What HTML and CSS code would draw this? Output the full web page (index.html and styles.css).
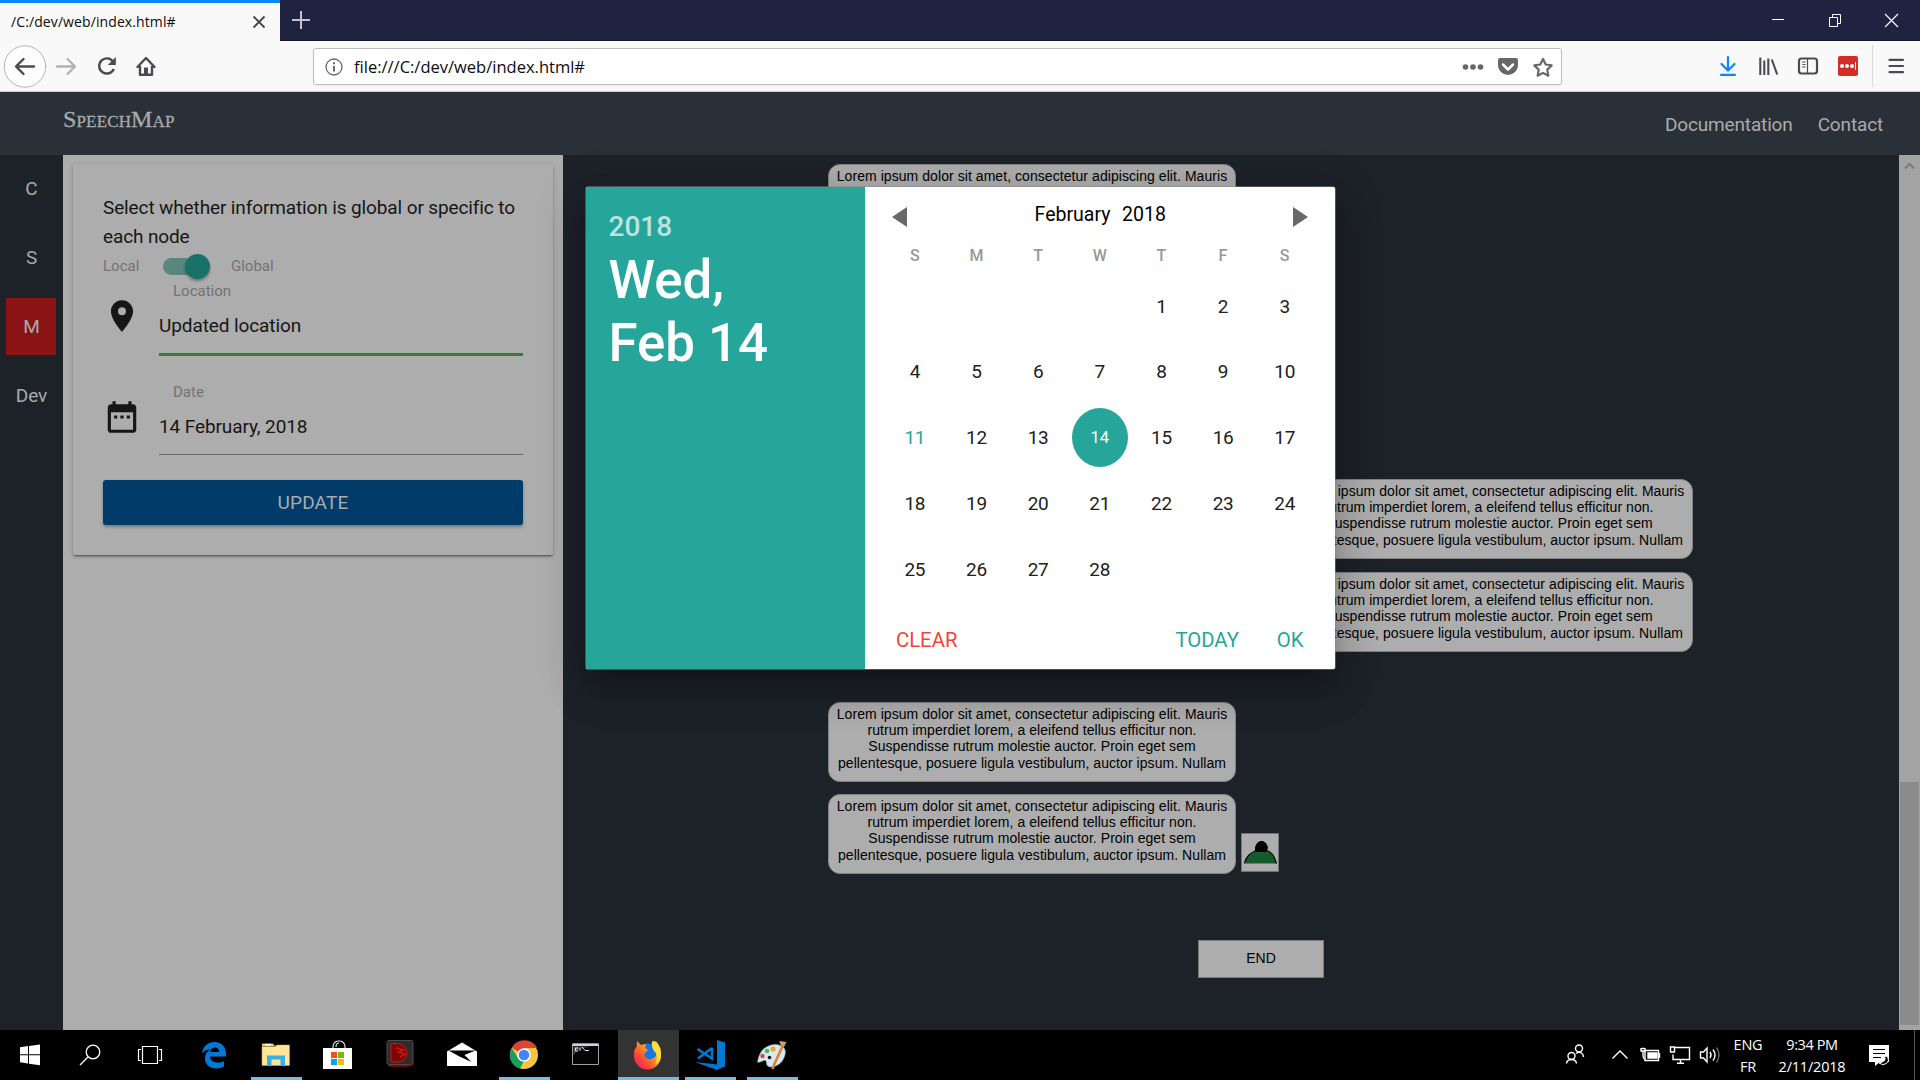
FILE: index.html
```html
<!DOCTYPE html>
<html lang="en">
<head>
<meta charset="utf-8">
<title>/C:/dev/web/index.html#</title>
<link rel="stylesheet" href="styles.css">
</head>
<body>
<div class="screen">
  <div class="tabstrip">
    <div class="tab"><span class="tab-title">/C:/dev/web/index.html#</span>
      <svg class="tab-close" viewBox="0 0 14 14"><path d="M1.5 1.5l11 11M12.500 1.500l-11 11" stroke="#444" stroke-width="1.800" fill="none"/></svg>
    </div>
    <svg class="tab-new" viewBox="0 0 18 18"><path d="M9 0v18M0 9h18" stroke="#c2c3cf" stroke-width="2"/></svg>
    <div class="window-buttons">
      <svg viewBox="1749 0 57 41"><path d="M1772 19.500h12" stroke="#fff"/></svg>
      <svg viewBox="1806 0 57 41"><path d="M1829.500 17.500h8v9h-8zM1832.500 17v-2.500h8v9h-2.500" stroke="#fff" fill="none"/></svg>
      <svg viewBox="1863 0 57 41"><path d="M1885 14l13 13M1898 14l-13 13" stroke="#fff" stroke-width="1.200"/></svg>
    </div>
  </div>

  <div class="toolbar">
    <svg class="nav-icons" viewBox="0 41 313 50" fill="none" stroke="#4a4a4f" stroke-width="2.400" stroke-linecap="round" stroke-linejoin="round">
      <circle cx="25" cy="66.500" r="20.700" fill="#fdfdfd" stroke="#b5b5b5" stroke-width="1"/>
      <path d="M34 66.500H16.500M23.500 59l-7.500 7.500 7.500 7.500"/>
      <path d="M57 66.500h17.500M67.500 59l7.500 7.500-7.500 7.500" stroke="#b4b4b4"/>
      <path d="M113 61.500A7.600 7.600 0 1 0 113.800 69" stroke-linecap="butt"/><path d="M115.800 57v8h-8z" fill="#4a4a4f" stroke="none"/>
      <path d="M137.500 67l8.500-9 8.500 9M140 66v8.800h12V66"/><path d="M144 74v-6.500h4V74z" fill="#4a4a4f" stroke="none"/>
    </svg>
    <div class="urlbar">
      <svg class="info" viewBox="0 0 18 18"><circle cx="9" cy="9" r="8" fill="none" stroke="#6a6a6a" stroke-width="1.300"/><path d="M9 8v5.500M9 4.300v2" stroke="#6a6a6a" stroke-width="2"/></svg>
      <span class="url">file:///C:/dev/web/index.html#</span>
      <svg class="url-actions" viewBox="1460 48 101 36">
        <g fill="#67676b"><circle cx="1465.500" cy="66" r="2.800"/><circle cx="1473" cy="66" r="2.800"/><circle cx="1480.500" cy="66" r="2.800"/>
        <path d="M1500 57h16q2 0 2 2v5a10 10 0 0 1-20 0v-5q0-2 2-2z"/></g>
        <path d="M1503 63.500l5 5 5-5" fill="none" stroke="#fff" stroke-width="2.500" stroke-linecap="round" stroke-linejoin="round"/>
        <path d="M1543 58l2.700 5.500 6 .9-4.400 4.200 1 6.100-5.300-2.800-5.300 2.800 1-6.100-4.400-4.200 6-.9z" fill="none" stroke="#67676b" stroke-width="2.200" stroke-linejoin="round"/>
      </svg>
    </div>
    <svg class="tool-icons" viewBox="1710 41 210 50" fill="none">
      <path d="M1728 57v12.500M1721.500 64l6.500 6.500 6.500-6.500M1721 74.800h14" stroke="#0a84ff" stroke-width="2.200" stroke-linecap="round" stroke-linejoin="round"/>
      <path d="M1760.300 57.500v17.500M1764.300 60.500v14.500M1768.300 58.500v16.500M1771.800 59.500l5.400 15" stroke="#4a4a4f" stroke-width="2.100"/>
      <rect x="1799" y="58.500" width="18" height="15" rx="2.500" stroke="#4a4a4f" stroke-width="2.200"/><path d="M1807.500 58v16M1802 62h3.500M1802.500 64.500h3M1802 67h3.500" stroke="#4a4a4f" stroke-width="1.200"/>
      <rect x="1838" y="56" width="20" height="20" rx="2" fill="#d32d27"/><g fill="#fff"><circle cx="1842" cy="66" r="2"/><circle cx="1847" cy="66" r="2"/><circle cx="1852" cy="66" r="2"/><path d="M1855 62h1v8h-1z"/></g>
      <path d="M1872.500 45v42" stroke="#dcdcdc"/>
      <path d="M1889.500 59.800h13.500M1889.500 66h13.500M1889.500 72.200h13.500" stroke="#4a4a4f" stroke-width="2.200" stroke-linecap="round"/>
    </svg>
  </div>

  <header class="app-header">
    <span class="brand">SpeechMap</span>
    <nav class="links"><span>Documentation</span><span>Contact</span></nav>
  </header>

  <main class="app">
    <aside class="rail">
      <div class="rail-item">C</div><div class="rail-item">S</div><div class="rail-item active">M</div><div class="rail-item">Dev</div>
    </aside>
    <section class="panel">
      <div class="card">
        <p class="prompt">Select whether information is global or specific to each node</p>
        <div class="switch"><span class="sw-local">Local</span><span class="lever"><i class="knob"></i></span><span>Global</span></div>
        <div class="field">
          <svg class="field-icon" viewBox="0 0 24 24"><path fill="#161616" d="M12 2C8.130 2 5 5.130 5 9c0 5.250 7 13 7 13s7-7.750 7-13c0-3.870-3.130-7-7-7zm0 9.500a2.500 2.500 0 0 1 0-5 2.500 2.500 0 0 1 0 5z"/></svg>
          <div class="field-body"><label>Location</label><div class="value valid">Updated location</div></div>
        </div>
        <div class="field">
          <svg class="field-icon" viewBox="0 0 24 24"><path fill="#161616" d="M9 11H7v2h2v-2zm4 0h-2v2h2v-2zm4 0h-2v2h2v-2zm2-7h-1V2h-2v2H8V2H6v2H5c-1.110 0-1.990.9-1.990 2L3 20c0 1.100.89 2 2 2h14c1.100 0 2-.9 2-2V6c0-1.100-.9-2-2-2zm0 16H5V9h14v11z"/></svg>
          <div class="field-body"><label>Date</label><div class="value">14 February, 2018</div></div>
        </div>
        <div class="update">UPDATE</div>
      </div>
    </section>
    <section class="canvas">
      <div class="node n1">Lorem ipsum dolor sit amet, consectetur adipiscing elit. Mauris</div>
      <div class="node n2">Lorem ipsum dolor sit amet, consectetur adipiscing elit. Mauris<br>rutrum imperdiet lorem, a eleifend tellus efficitur non.<br>Suspendisse rutrum molestie auctor. Proin eget sem<br>pellentesque, posuere ligula vestibulum, auctor ipsum. Nullam</div>
      <div class="node n3">Lorem ipsum dolor sit amet, consectetur adipiscing elit. Mauris<br>rutrum imperdiet lorem, a eleifend tellus efficitur non.<br>Suspendisse rutrum molestie auctor. Proin eget sem<br>pellentesque, posuere ligula vestibulum, auctor ipsum. Nullam</div>
      <div class="node n4">Lorem ipsum dolor sit amet, consectetur adipiscing elit. Mauris<br>rutrum imperdiet lorem, a eleifend tellus efficitur non.<br>Suspendisse rutrum molestie auctor. Proin eget sem<br>pellentesque, posuere ligula vestibulum, auctor ipsum. Nullam</div>
      <div class="node n5">Lorem ipsum dolor sit amet, consectetur adipiscing elit. Mauris<br>rutrum imperdiet lorem, a eleifend tellus efficitur non.<br>Suspendisse rutrum molestie auctor. Proin eget sem<br>pellentesque, posuere ligula vestibulum, auctor ipsum. Nullam</div>
      <svg class="hat" viewBox="1241 833 38 39"><path fill="#adadad" stroke="#77797b" stroke-width=".8" d="M1241.400 833.400h37.200v38h-37.200z"/><path d="M1245 863.500q1-5 4-8t6-4h13q4 2 5.500 5t3 7z" fill="#145c2e"/><path d="M1244.500 863.500q1-5 4-8t6.500-4.500h13q4 2 5.500 5t3 7.500" fill="none" stroke="#000" stroke-width="1.200"/><path d="M1255 852v-5l2-4 3-2h3l3 2 2 4-1 5z" fill="#000"/></svg>
      <div class="end-node">END</div>
    </section>
    <div class="scrollbar">
      <svg viewBox="0 0 21 24"><path d="M6 13.500l4.500-4.700 4.500 4.700" fill="none" stroke="#7b7b7b" stroke-width="2"/></svg>
      <div class="thumb"></div>
    </div>
  </main>

  <footer class="taskbar">
    <div class="tb sys"><svg viewBox="10 1035 40 40"><path fill="#fff" d="M20 1047.300l8-1.200v8.200h-8zM29 1046l11-1.500v9.800H29zM20 1055.300h8v8.200l-8-1.200zM29 1055.300h11v10l-11-1.600z"/></svg></div>
    <div class="tb sys"><svg viewBox="70 1035 40 40" fill="none" stroke="#fff" stroke-width="1.300"><circle cx="93" cy="1052" r="6.800"/><path d="M88 1057l-8 8"/></svg></div>
    <div class="tb sys"><svg viewBox="130 1035 40 40" fill="none" stroke="#fff" stroke-width="1.200"><path d="M142.500 1046.500h15v17h-15zM141 1049.500h-2.500v11h2.500M159 1049.500h2.500v11h-2.500"/></svg></div>
    <div class="tb first"><svg viewBox="194 1035 40 40"><path fill="#0078d7" d="M202 1053c1-7 6-11 12.500-11 7 0 11.500 5 11.500 11.500v3h-16c.3 4 4 6 8 6 2.500 0 4.500-.6 6-1.600v5.600c-2 1.300-4.700 2-7.500 2-7 0-11.500-4-11.500-10 0-4.500 2.300-7.500 5.500-9-3.500.2-6.500 1.500-8.500 3.500zm8.200-1h9c0-3-1.600-4.600-4.300-4.600s-4.200 2-4.700 4.600z"/></svg></div>
    <div class="tb on"><svg viewBox="256 1035 40 40"><path fill="#f5c33b" d="M262 1043.500h11l2 2.500h-13z"/><path fill="#ffe699" stroke="#c9a94f" stroke-width=".5" d="M262 1046.500h13l2-1.500h12.500v20.500H262z"/><path fill="#fff" d="M265 1044h6v1.500h-6z"/><path fill="#35b1e8" d="M267 1055.500h18v10.500h-4.500v-6.500h-9v6.500H267z"/></svg></div>
    <div class="tb"><svg viewBox="318 1035 40 40"><path d="M333 1048v-2q1-5 6-5t6 5v2M336 1047q0-4 3-4" fill="none" stroke="#ddd" stroke-width="1.200"/><path fill="#fff" d="M323 1048h29v21h-29z"/><path fill="#f25022" d="M331 1052h6v6h-6z"/><path fill="#7fba00" d="M338 1052h6v6h-6z"/><path fill="#00a4ef" d="M331 1059h6v6h-6z"/><path fill="#ffb900" d="M338 1059h6v6h-6z"/></svg></div>
    <div class="tb"><svg viewBox="380 1035 40 40"><rect x="387" y="1040.500" width="26" height="24" rx="2" fill="#2c2c2c" stroke="#4d4d4d"/><path d="M391 1043.500h6q10 1.500 10 10 0 6.500-7 8.500h-9z" fill="#7a0608" stroke="#c9191b" stroke-width="1"/><path d="M396 1048l8 2-6 2 7 2-5 3" stroke="#c81416" stroke-width="1.500" fill="none"/><path d="M388 1065.500q16 1.500 25-1" stroke="#900c0c" stroke-width="1.500" fill="none"/></svg></div>
    <div class="tb"><svg viewBox="442 1035 40 40"><path fill="#fff" d="M447 1051.500l15-9 15 9V1066h-30z"/><path fill="#000" d="M448.500 1050.500h27l-11 4.500 7 7-12-5.500z"/></svg></div>
    <div class="tb on"><svg viewBox="504 1035 40 40"><circle cx="524" cy="1055" r="14" fill="#f5c542"/><path fill="#db4437" d="M524 1055l-12-7a14 14 0 0 1 25 0h-13z"/><path fill="#1a9e5b" d="M511.800 1048l6.500 10.500 5.700 2.500-4 7.600a14 14 0 0 1-8.200-20.600z"/><circle cx="524" cy="1055" r="6.800" fill="#fff"/><circle cx="524" cy="1055" r="5.300" fill="#4285f4"/></svg></div>
    <div class="tb"><svg viewBox="566 1035 40 40"><path fill="#050505" stroke="#9aa0a4" d="M572.500 1044h26v20.500h-26z"/><path fill="#cbd2d8" d="M572.500 1043.500h26v2.500h-26z"/><path fill="#4c4c4c" d="M573.500 1046.500h18q-15 1-18 9z"/><path d="M578 1048h-2.500v3h2.500M580 1048v3M582 1047l3 3.500h4" fill="none" stroke="#ddd"/></svg></div>
    <div class="tb on focus"><svg viewBox="628 1035 40 40"><defs><linearGradient id="fox" x1="1" y1="0" x2="0" y2="1"><stop offset="0" stop-color="#fff04a"/><stop offset=".4" stop-color="#ff9a1f"/><stop offset=".7" stop-color="#ff4236"/><stop offset="1" stop-color="#e0128a"/></linearGradient></defs><circle cx="648" cy="1054.500" r="11" fill="#1478e0"/><path fill="url(#fox)" d="M637 1041l4 4 5-1-1 4 3 2-4 4q1 6 7 5 7-1 5-9-5-4-3-9 4 0 5 3 3.500 4 3 11a13.500 13.500 0 0 1-27 2q-1-7 2.500-10z"/><path fill="#ffe03a" d="M652 1041q9 6 9 14-1 7-6 10 3-7 1-12-5-4-4-12z"/></svg></div>
    <div class="tb on"><svg viewBox="690 1035 40 40"><path fill="#0078d0" d="M717 1040l8 2.500v24l-8 3.500-22-8 22 2.500z"/><path d="M712 1048l-14 10.500M697.500 1049l14.500 9.500V1048" fill="none" stroke="#0078d0" stroke-width="2.600"/></svg></div>
    <div class="tb on"><svg viewBox="752 1035 40 40"><path fill="#d5e8f3" stroke="#8daec4" stroke-width=".6" d="M757.500 1062q2-11 8-14.500 8-5 15-2t4 11q-3 9-13 10.500-5 0-5-4t-4-2-5 1z"/><circle cx="762.500" cy="1056" r="2.200" fill="#e54838"/><circle cx="767" cy="1051" r="2.300" fill="#4db848"/><circle cx="773" cy="1049" r="2.500" fill="#f6a21c"/><circle cx="769.500" cy="1057.500" r="1.800" fill="#111"/><path d="M783 1045l-9 20-1.500 4" stroke="#dc8430" stroke-width="2.600" fill="none"/><path d="M780 1044l-.5-3 7 1-2.500 5z" fill="#c99e6f"/></svg></div>
    <div class="tray">
      <svg class="tray-icons" viewBox="1560 1035 164 40" fill="none" stroke="#fff" stroke-width="1.400"><circle cx="1579" cy="1048.500" r="3.500"/><circle cx="1571.500" cy="1056" r="3.500"/><path d="M1566.500 1063.500q.5-4 5-4t5 4M1576 1053.500q3-2 5.500-.5 2 1.500 2 4"/><path d="M1612.500 1058.500l7.500-7.500 7.500 7.500"/><path d="M1645 1050.500h13.500v10H1645zM1659.500 1053v5" /><path d="M1648 1053h9v5h-9z" fill="#fff"/><path d="M1641 1048v3h4v-3M1643 1051.500v4q0 3 2 4M1641.500 1048.500h3"/><path d="M1675 1047.500h14.500v12H1673v-5M1680.500 1060v3M1677 1063.300h7M1670.500 1047h4v5h-4z"/><path d="M1700.500 1052h3l3.500-4v14l-3.500-4h-3z"/><path d="M1710 1052q2 3 0 6M1713 1049.500q4 5.500 0 11"/><path d="M1716.500 1047.500q5 7.500 0 15" stroke="#666"/></svg>
      <div class="lang"><span>ENG</span><span>FR</span></div>
      <div class="clock"><span class="time">9:34 PM</span><span>2/11/2018</span></div>
      <svg class="notify" viewBox="1864 1035 30 40"><path fill="#fff" d="M1869 1045h20v17h-9l-5 4v-4h-6z"/><path d="M1873 1049.500h12M1873 1053.500h12M1873 1057.500h8" stroke="#000" stroke-width="1.200"/><path d="M1884 1056q4 5-5 7 4 3 7.500.5 3.500-3 1-7z" fill="#000" stroke="#fff"/></svg>
      <div class="desk-edge"></div>
    </div>
  </footer>

  <div class="modal">
    <div class="date-display"><div class="year">2018</div><div class="date">Wed,<br>Feb 14</div></div>
    <div class="calendar">
      <div class="month-row"><i class="arrow left"></i><span class="month">February&nbsp; 2018</span><i class="arrow right"></i></div>
      <div class="weekdays"><b>S</b><b>M</b><b>T</b><b>W</b><b>T</b><b>F</b><b>S</b></div>
      <div class="days">
        <span></span><span></span><span></span><span></span><span>1</span><span>2</span><span>3</span>
        <span>4</span><span>5</span><span>6</span><span>7</span><span>8</span><span>9</span><span>10</span>
        <span class="today">11</span><span>12</span><span>13</span><span class="selected">14</span><span>15</span><span>16</span><span>17</span>
        <span>18</span><span>19</span><span>20</span><span>21</span><span>22</span><span>23</span><span>24</span>
        <span>25</span><span>26</span><span>27</span><span>28</span>
      </div>
      <div class="actions"><span class="clear">CLEAR</span><span class="today-btn">TODAY</span><span>OK</span></div>
    </div>
  </div>
</div>
</body>
</html>
```
FILE: styles.css
```css
* { box-sizing: border-box; }
body { margin: 0; font-family: Roboto, sans-serif; overflow: hidden; }
svg { display: block; flex: none; }
.screen { position: relative; width: 1920px; height: 1080px; display: flex; flex-direction: column; overflow: hidden; }

.tabstrip { height: 41px; flex: none; background: #202340; border-bottom: 1px solid #15172b; display: flex; align-items: center; }
.tab { width: 280px; height: 41px; background: #f9f9f9; border-top: 3px solid #0a84ff; display: flex; align-items: center; padding: 0 14px 0 11px; font: 14px "Open Sans", sans-serif; color: #0c0c0d; }
.tab-title { flex: 1; letter-spacing: .1px; }
.tab-close { width: 14px; height: 14px; }
.tab-new { width: 18px; height: 18px; margin-left: 12px; }
.window-buttons { margin-left: auto; display: flex; }
.window-buttons svg { width: 57px; height: 41px; }

.toolbar { height: 51px; flex: none; background: #f9f9f9; border-bottom: 1px solid #ccc; display: flex; }
.nav-icons { width: 313px; height: 50px; }
.urlbar { width: 1249px; height: 37px; margin-top: 7px; background: #fff; border: 1px solid #bdbdbd; border-radius: 3px; display: flex; align-items: center; padding-left: 11px; box-shadow: 0 1px 3px #0000000d; }
.info { width: 18px; height: 18px; }
.url { font: 16.500px "Open Sans", sans-serif; margin-left: 11px; flex: 1; color: #0c0c0d; white-space: nowrap; }
.url-actions { width: 101px; height: 36px; }
.tool-icons { width: 210px; height: 50px; margin-left: auto; }

.app-header { height: 63px; flex: none; background: #293037; color: #a9abad; display: flex; justify-content: space-between; padding: 0 37px 0 63px; }
.brand { font: 24px "Liberation Serif", serif; font-variant: small-caps; line-height: 55px; letter-spacing: .15px; -webkit-text-stroke: .3px #a9abad; }
.links { display: flex; gap: 25px; font-size: 19px; line-height: 66px; letter-spacing: -.15px; }

.app { height: 875px; flex: none; display: flex; background: #1d2128; }
.rail { width: 63px; padding: 5px 7px 0 6px; display: flex; flex-direction: column; gap: 12px; }
.rail-item { height: 57px; width: 50px; display: flex; align-items: center; justify-content: center; color: #a9abad; font-size: 19px; padding-left: 1px; letter-spacing: -.1px; }
.rail-item.active { background: #8a1414; }
.panel { width: 500px; background: #adadad; padding: 9px 10px; }
.card { height: 391px; padding: 29px 30px 0; border-radius: 2px; box-shadow: 0 2px 2px 0 rgba(0,0,0,.2), 0 3px 1px -2px rgba(0,0,0,.2), 0 1px 5px 0 rgba(0,0,0,.16); color: #161616; font-size: 19px; letter-spacing: -.1px; }
.prompt { margin: 0; line-height: 29px; letter-spacing: -.12px; }
.switch { height: 29px; display: flex; align-items: center; color: #737373; font-size: 15px; letter-spacing: 0; margin-top: 1px; }
.sw-local { width: 60px; }
.switch > span:not(.lever) { padding-bottom: 2px; }
.lever { width: 45px; height: 17px; border-radius: 9px; background: #59877f; margin-right: 23px; display: flex; align-items: center; justify-content: flex-end; }
.knob { width: 25px; height: 25px; flex: none; border-radius: 50%; background: #1a7168; box-shadow: 0 2px 3px rgba(0,0,0,.35); margin-right: -2px; }
.field { display: flex; height: 101px; }
.field-icon { width: 38px; height: 38px; margin-top: 16px; margin-left: -.5px; }
.field-body { flex: 1; margin-left: 18.500px; }
.field-body label { display: block; font-size: 15px; line-height: 20px; height: 19px; padding-left: 14px; color: #737373; letter-spacing: 0; }
.value { height: 54px; line-height: 52px; border-bottom: 1px solid #696969; }
.value.valid { border-bottom: 3px solid #357a38; height: 56px; }
.update { height: 45px; border-radius: 3px; background: #003b69; color: #a9abad; display: flex; align-items: center; justify-content: center; box-shadow: 0 2px 3px rgba(0,0,0,.3); margin-top: -3px; letter-spacing: .15px; }

.canvas { position: relative; width: 1336px; overflow: hidden; }
.node { position: absolute; width: 408px; height: 80px; border-radius: 12px; border: 1px solid #808284; background: #adadad; color: #000; font: 14px/16.400px "Liberation Sans", Arial, sans-serif; letter-spacing: .06px; padding-top: 2.500px; text-align: center; white-space: nowrap; }
.n1 { left: 265px; top: 9px; }
.n2 { left: 722px; top: 324px; }
.n3 { left: 722px; top: 417px; }
.n4 { left: 265px; top: 547px; }
.n5 { left: 265px; top: 639px; }
.hat { position: absolute; left: 678px; top: 678px; width: 38px; height: 39px; }
.end-node { position: absolute; left: 635px; top: 785px; width: 126px; height: 38px; background: #adadad; border: 1px solid #77797b; color: #000; font: 14px/35px "Liberation Sans", Arial, sans-serif; text-align: center; }
.scrollbar { width: 21px; background: #a3a3a3; display: flex; flex-direction: column; justify-content: space-between; padding: 0 1px 5px 0; }
.scrollbar svg { width: 21px; height: 24px; }
.thumb { height: 243px; margin-left: 1px; background: #8b8b8b; }

.taskbar { height: 50px; flex: none; background: #000; display: flex; }
.tb { width: 62px; display: flex; flex-direction: column; align-items: center; padding-top: 5px; height: 50px; position: relative; }
.tb svg { width: 40px; height: 40px; }
.tb.sys { width: 60px; }
.tb.first { margin-left: 3px; }
.tb.on { background: linear-gradient(#76b9ed, #76b9ed) center bottom / 51px 3px no-repeat; }
.tb.focus { background: linear-gradient(#76b9ed, #76b9ed) 1px bottom / 61px 3px no-repeat, linear-gradient(#333, #333) 1px 0 / 61px 50px no-repeat; }
.tray { margin-left: auto; display: flex; color: #fff; font: 14.500px/22px "Open Sans", sans-serif; }
.tray-icons { width: 164px; height: 40px; margin-top: 5px; }
.lang, .clock { display: flex; flex-direction: column; align-items: center; padding-top: 4px; white-space: nowrap; letter-spacing: -.2px; }
.lang { width: 48px; }
.time { letter-spacing: -.4px; }
.clock { width: 80px; }
.notify { width: 30px; height: 40px; margin: 5px 20px 0 12px; }
.desk-edge { width: 6px; border-left: 1px solid #555; }

.modal { position: absolute; left: 585.500px; top: 187px; width: 749px; height: 482px; background: #fff; border-radius: 2px; display: flex; overflow: hidden; box-shadow: 0 0 0 .5px #888, 0 24px 38px 3px rgba(0,0,0,.14), 0 9px 46px 8px rgba(0,0,0,.12), 0 11px 15px -7px rgba(0,0,0,.2); }
.date-display { width: 279.500px; background: #26a69a; color: #fff; padding: 22px 23px; font-weight: 500; }
.year { font-size: 28px; line-height: 36px; color: rgba(255,255,255,.7); }
.date { font-size: 52.800px; line-height: 63px; margin-top: 4px; }
.calendar { width: 469.500px; padding: 0 19px; }
.month-row { height: 57px; display: flex; align-items: center; justify-content: space-between; padding: 3px 7px 0 8px; color: #000; font-size: 19.500px; }
.month { margin-top: -5px; word-spacing: 1px; }
.arrow { border: solid transparent; border-width: 10px 0; }
.arrow.left { border-right: 15px solid #696969; }
.arrow.right { border-left: 15px solid #696969; }
.weekdays { display: grid; grid-template-columns: repeat(7, 1fr); height: 22px; margin-bottom: 8px; line-height: 23px; text-align: center; font-size: 16px; color: #999; }
.weekdays b { font-weight: 500; }
.days { display: grid; grid-template-columns: repeat(7, 1fr); grid-template-rows: 65px 65px 66px 66px 66px; place-items: center; font-size: 19px; color: #212121; letter-spacing: -.3px; }
.today { color: #26a69a; }
.selected { width: 56px; height: 59px; border-radius: 50%; background: #26a69a; color: #fff; font-size: 16.500px; line-height: 60px; text-align: center; letter-spacing: 0; }
.actions { display: flex; align-items: center; height: 67px; padding: 9px 12px 0 12px; color: #26a69a; font-size: 20.300px; }
.clear { color: #f44336; flex: 1; }
.today-btn { margin-right: 38px; }
```
